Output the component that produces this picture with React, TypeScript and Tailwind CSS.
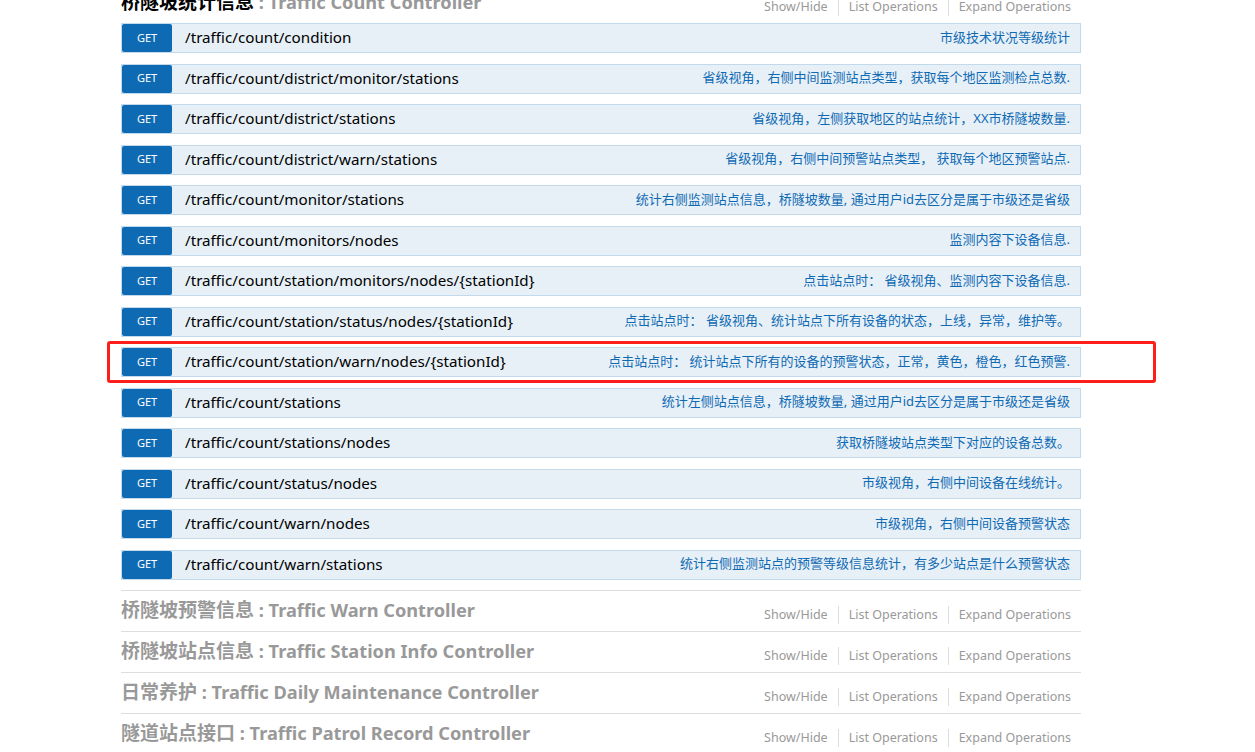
const ops = [
  ["/traffic/count/condition", "市级技术状况等级统计"],
  ["/traffic/count/district/monitor/stations", "省级视角，右侧中间监测站点类型，获取每个地区监测检点总数."],
  ["/traffic/count/district/stations", "省级视角，左侧获取地区的站点统计，XX市桥隧坡数量."],
  ["/traffic/count/district/warn/stations", "省级视角，右侧中间预警站点类型， 获取每个地区预警站点."],
  ["/traffic/count/monitor/stations", "统计右侧监测站点信息，桥隧坡数量, 通过用户id去区分是属于市级还是省级"],
  ["/traffic/count/monitors/nodes", "监测内容下设备信息."],
  ["/traffic/count/station/monitors/nodes/{stationId}", "点击站点时： 省级视角、监测内容下设备信息."],
  ["/traffic/count/station/status/nodes/{stationId}", "点击站点时： 省级视角、统计站点下所有设备的状态，上线，异常，维护等。"],
  ["/traffic/count/station/warn/nodes/{stationId}", "点击站点时： 统计站点下所有的设备的预警状态，正常，黄色，橙色，红色预警."],
  ["/traffic/count/stations", "统计左侧站点信息，桥隧坡数量, 通过用户id去区分是属于市级还是省级"],
  ["/traffic/count/stations/nodes", "获取桥隧坡站点类型下对应的设备总数。"],
  ["/traffic/count/status/nodes", "市级视角，右侧中间设备在线统计。"],
  ["/traffic/count/warn/nodes", "市级视角，右侧中间设备预警状态"],
  ["/traffic/count/warn/stations", "统计右侧监测站点的预警等级信息统计，有多少站点是什么预警状态"],
];

const others = [
  ["桥隧坡预警信息", "Traffic Warn Controller"],
  ["桥隧坡站点信息", "Traffic Station Info Controller"],
  ["日常养护", "Traffic Daily Maintenance Controller"],
  ["隧道站点接口", "Traffic Patrol Record Controller"],
];

function Options() {
  return (
    <ul className="flex items-center pt-[7px] pr-[10px] text-[12.5px] leading-[18px] text-[#999]">
      <li className="pr-[10px] border-r border-[#ddd]">Show/Hide</li>
      <li className="px-[10px] border-r border-[#ddd]">List Operations</li>
      <li className="pl-[10px]">Expand Operations</li>
    </ul>
  );
}

function Heading({ cn, en, dark }: { cn: string; en: string; dark?: boolean }) {
  return (
    <div className="flex justify-between h-[41px] border-t border-[#ddd]">
      <h2 className="pt-[7px] text-[19px] leading-[24px] font-bold text-[#999]">
        <span className={dark ? "text-black" : ""}>{cn}</span>
        <span className="text-[18.2px]"> : {en}</span>
      </h2>
      <Options />
    </div>
  );
}

export default function App() {
  return (
    <div
      className="w-[1255px] h-[752px] overflow-hidden bg-white"
      style={{ fontFamily: '"Noto Sans", "Noto Sans CJK SC", sans-serif' }}
    >
      <div className="ml-[121px] w-[960px] mt-[-18px]">
        <Heading cn="桥隧坡统计信息" en="Traffic Count Controller" dark />
        <ul className="flex flex-col">
          {ops.map(([path, desc], i) => (
            <li key={path} className="relative mb-[10.5px]">
              <div className="flex items-center h-[30px] bg-[#e7f0f7] border border-[#c3d9ec]">
                <span className="flex items-center justify-center w-[50px] h-[28px] bg-[#0f6ab4] rounded-[2px] text-white text-[11px]">
                  GET
                </span>
                <span className="pl-[13px] pb-[1px] text-[15.2px] text-black">{path}</span>
                <span className="ml-auto pr-[10px] pb-[1px] text-[13px] text-[#0f6ab4]">{desc}</span>
              </div>
              {i === 8 && (
                <div className="absolute top-[-6px] bottom-[-6px] left-[-14px] right-[-75px] border-[3px] border-[#ff1f1a] rounded-[3px]" />
              )}
            </li>
          ))}
        </ul>
        {others.map(([cn, en]) => (
          <Heading key={en} cn={cn} en={en} />
        ))}
      </div>
    </div>
  );
}
